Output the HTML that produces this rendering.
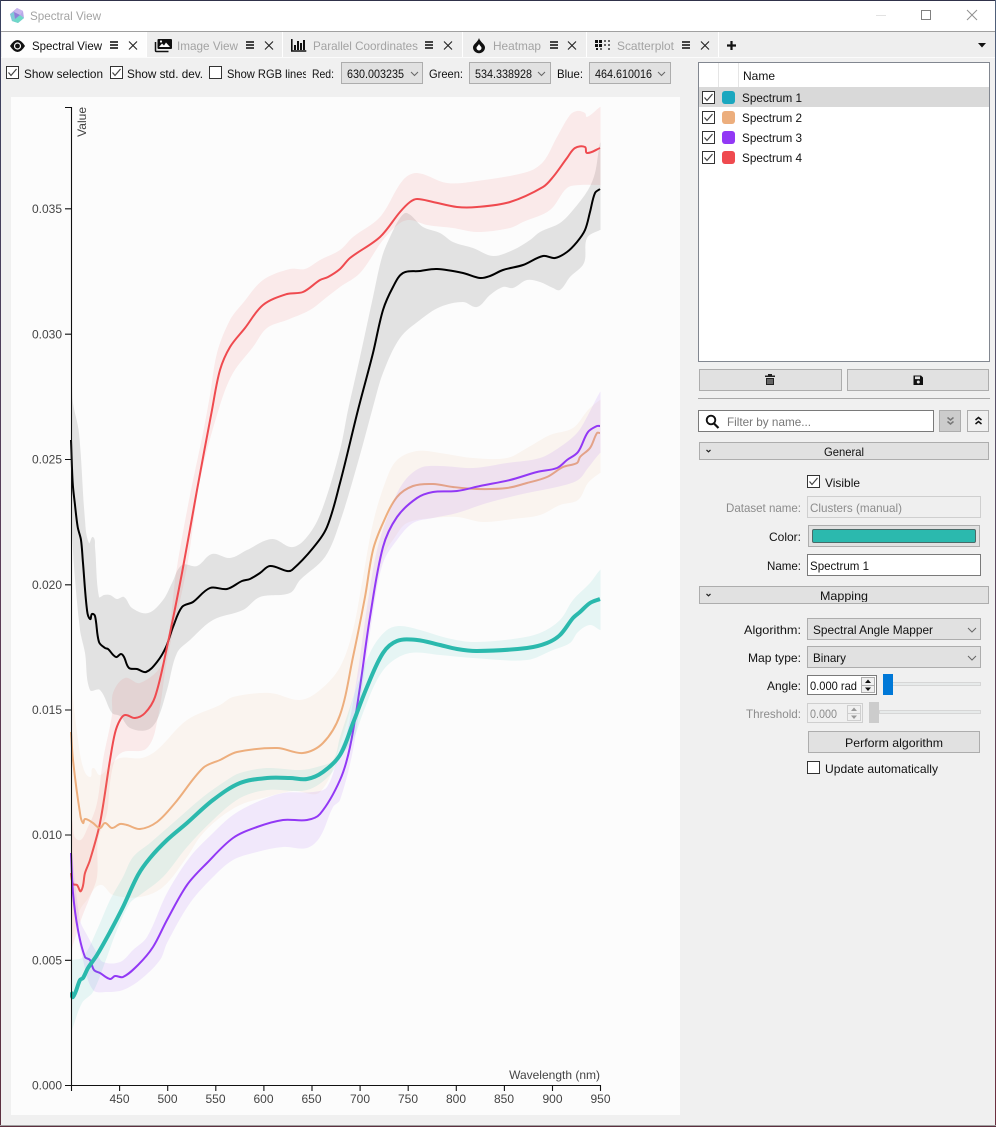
<!DOCTYPE html>
<html><head><meta charset="utf-8"><title>Spectral View</title>
<style>
html,body{margin:0;padding:0;background:#f0f0f0;width:996px;height:1127px;overflow:hidden}
svg{display:block}
text{font-family:"Liberation Sans",sans-serif;font-size:12px;fill:#111}
.g{fill:#8c8c8c}
.t{fill:#a3a3a3}
.ax{fill:#444}
.ph{fill:#777}
.btn{fill:#e1e1e1;stroke:#adadad;stroke-width:1;shape-rendering:crispEdges}
.inp{fill:#fff;stroke:#7a7a7a;stroke-width:1;shape-rendering:crispEdges}
.dis{fill:#efefef;stroke:#cfcfcf;stroke-width:1;shape-rendering:crispEdges}
.cb{fill:#fff;stroke:#333;stroke-width:1;shape-rendering:crispEdges}
.ck{fill:none;stroke:#444;stroke-width:1.2}
.ln{fill:none;stroke-linejoin:round;stroke-linecap:butt}
.chev{fill:none;stroke:#666;stroke-width:1}
.x{stroke:#222;stroke-width:1.1;fill:none}
.ham{fill:#444}
.band{fill-opacity:.1;stroke:none}
</style></head><body>
<svg width="996" height="1127" viewBox="0 0 996 1127" xmlns="http://www.w3.org/2000/svg">
<defs>
<linearGradient id="edge" x1="0" y1="0" x2="0" y2="1"><stop offset="0" stop-color="#38415f"/><stop offset=".5" stop-color="#5b3d58"/><stop offset="1" stop-color="#5c2f3f"/></linearGradient>
<linearGradient id="edge2" x1="0" y1="0" x2="0" y2="1"><stop offset="0" stop-color="#50607a"/><stop offset=".5" stop-color="#5b4a60"/><stop offset="1" stop-color="#6c2f3f"/></linearGradient>
<clipPath id="rgb"><rect x="225" y="62" width="81" height="24"/></clipPath>
<clipPath id="map"><rect x="700" y="587" width="288" height="15"/></clipPath>
<clipPath id="plot"><rect x="70" y="97" width="530.500" height="1000"/></clipPath>
</defs>
<rect width="996" height="1127" fill="#f0f0f0"/>
<!-- title bar -->
<rect x="0" y="0" width="996" height="31" fill="#fff"/>
<rect x="0" y="31" width="996" height="1" fill="#a0a0a0"/>
<polygon points="17,8 23,11 24,18 18,23 12,21 10,14" fill="#b9a9e8"/>
<polygon points="17,8 23,11 20,15 14,12" fill="#c9b6ee"/>
<polygon points="10,14 14,12 15,19 12,21" fill="#7fcbd6"/>
<polygon points="15,19 20,15 24,18 18,23 12,21" fill="#6fd8c8"/>
<polygon points="14,12 20,15 15,19" fill="#8f7fd8"/>
<text x="30" y="20" class="t" textLength="71" lengthAdjust="spacingAndGlyphs">Spectral View</text>
<rect x="876" y="15" width="10" height="1" fill="#e2e2e2"/>
<rect x="921.500" y="10.500" width="9" height="9" fill="none" stroke="#808080" shape-rendering="crispEdges"/>
<path d="M967 10L977 20M977 10L967 20" stroke="#909090" fill="none"/>
<!-- tab bar -->
<rect x="2" y="32" width="994" height="25" fill="#eeeeee"/>
<rect x="2" y="32" width="144" height="25" fill="#fdfdfd"/>
<rect x="146" y="32" width="1" height="25" fill="#fff"/>
<rect x="282" y="32" width="1" height="25" fill="#fff"/>
<rect x="462" y="32" width="1" height="25" fill="#fff"/>
<rect x="586" y="32" width="1" height="25" fill="#fff"/>
<rect x="718" y="32" width="1" height="25" fill="#fff"/>
<rect x="0" y="57" width="996" height="1" fill="#fbfbfb"/>
<!-- eye -->
<path d="M10 46Q17.500 34 25 46Q17.500 58 10 46Z" fill="#111"/><circle cx="17.500" cy="46" r="3.600" fill="#fff"/><circle cx="17.500" cy="46" r="2.400" fill="#111"/>
<text x="32" y="50" textLength="70" lengthAdjust="spacingAndGlyphs">Spectral View</text>
<g class="ham"><rect x="110" y="41" width="8" height="2"/><rect x="110" y="44" width="8" height="2"/><rect x="110" y="47" width="8" height="2"/></g>
<path class="x" d="M129 41.500L137 49.500M137 41.500L129 49.500"/>
<!-- image icon -->
<path d="M158.500 39h12.500a1 1 0 0 1 1 1v8a1 1 0 0 1-1 1h-12.500a1 1 0 0 1-1-1v-8a1 1 0 0 1 1-1z" fill="#111"/>
<path d="M155.500 42v8.500a1 1 0 0 0 1 1h12" fill="none" stroke="#111" stroke-width="1.500"/>
<path d="M159 47l3-3.500 2 2 2-3 4 4.500z" fill="#fff"/><circle cx="161" cy="41.500" r="1.100" fill="#fff"/>
<text x="177" y="50" class="t" textLength="61" lengthAdjust="spacingAndGlyphs">Image View</text>
<g class="ham"><rect x="246" y="41" width="8" height="2"/><rect x="246" y="44" width="8" height="2"/><rect x="246" y="47" width="8" height="2"/></g>
<path class="x" d="M265 41.500L273 49.500M273 41.500L265 49.500"/>
<!-- chart icon -->
<path d="M291.800 39v12h14.500" fill="none" stroke="#111" stroke-width="1.600"/>
<g fill="#111"><rect x="294" y="45" width="2" height="5"/><rect x="297" y="41" width="2" height="9"/><rect x="300" y="43" width="2" height="7"/><rect x="303" y="40" width="2" height="10"/></g>
<text x="313" y="50" class="t" textLength="105" lengthAdjust="spacingAndGlyphs">Parallel Coordinates</text>
<g class="ham"><rect x="425" y="41" width="8" height="2"/><rect x="425" y="44" width="8" height="2"/><rect x="425" y="47" width="8" height="2"/></g>
<path class="x" d="M444 41.500L452 49.500M452 41.500L444 49.500"/>
<!-- drop icon -->
<path d="M479 38C480 42 485 44 485 47.500A6 5.700 0 0 1 473 47.500C473 44 478 42 479 38Z" fill="#111"/><path d="M479 44C480 46 481.500 46.500 481.500 48A2.500 2.500 0 0 1 476.500 48C476.500 46.500 478 46 479 44Z" fill="#fff"/>
<text x="493" y="50" class="t" textLength="48" lengthAdjust="spacingAndGlyphs">Heatmap</text>
<g class="ham"><rect x="550" y="41" width="8" height="2"/><rect x="550" y="44" width="8" height="2"/><rect x="550" y="47" width="8" height="2"/></g>
<path class="x" d="M568 41.500L576 49.500M576 41.500L568 49.500"/>
<!-- scatter icon -->
<g fill="#111"><rect x="595" y="40" width="3" height="3"/><rect x="599" y="40" width="3" height="3"/><rect x="595" y="44" width="3" height="3"/><rect x="599" y="44" width="3" height="3"/><rect x="596" y="48" width="2" height="2"/></g>
<g fill="#666"><rect x="604" y="40" width="2" height="2"/><rect x="608" y="40" width="2" height="2"/><rect x="604" y="44" width="2" height="2"/><rect x="608" y="44" width="2" height="2"/><rect x="600" y="48" width="2" height="2"/><rect x="608" y="48" width="2" height="2"/></g>
<text x="617" y="50" class="t" textLength="57" lengthAdjust="spacingAndGlyphs">Scatterplot</text>
<g class="ham"><rect x="682" y="41" width="8" height="2"/><rect x="682" y="44" width="8" height="2"/><rect x="682" y="47" width="8" height="2"/></g>
<path class="x" d="M701 41.500L709 49.500M709 41.500L701 49.500"/>
<path d="M731.500 41v9M727 45.500h9" stroke="#111" stroke-width="2.200" fill="none"/>
<polygon points="978,43 986,43 982,47.500" fill="#111"/>
<!-- toolbar -->
<rect class="cb" x="6.500" y="66.500" width="12" height="12"/><path class="ck" d="M8.500 72.500l2.500 3 5.500-6.500"/>
<text x="24" y="78" textLength="79" lengthAdjust="spacingAndGlyphs">Show selection</text>
<rect class="cb" x="110.500" y="66.500" width="12" height="12"/><path class="ck" d="M112.500 72.500l2.500 3 5.500-6.500"/>
<text x="127" y="78" textLength="76" lengthAdjust="spacingAndGlyphs">Show std. dev.</text>
<rect class="cb" x="209.500" y="66.500" width="12" height="12"/>
<text x="227" y="78" textLength="81" lengthAdjust="spacingAndGlyphs" clip-path="url(#rgb)">Show RGB lines</text>
<text x="312" y="78" textLength="22" lengthAdjust="spacingAndGlyphs">Red:</text>
<rect class="btn" x="341.500" y="62.500" width="81" height="21"/>
<text x="347" y="78" textLength="57" lengthAdjust="spacingAndGlyphs">630.003235</text>
<path class="chev" d="M411 72l3.500 3.500 3.500-3.500"/>
<text x="429" y="78" textLength="34" lengthAdjust="spacingAndGlyphs">Green:</text>
<rect class="btn" x="469.500" y="62.500" width="81" height="21"/>
<text x="475" y="78" textLength="57" lengthAdjust="spacingAndGlyphs">534.338928</text>
<path class="chev" d="M538 72l3.500 3.500 3.500-3.500"/>
<text x="557" y="78" textLength="26" lengthAdjust="spacingAndGlyphs">Blue:</text>
<rect class="btn" x="589.500" y="62.500" width="81" height="21"/>
<text x="595" y="78" textLength="57" lengthAdjust="spacingAndGlyphs">464.610016</text>
<path class="chev" d="M658 72l3.500 3.500 3.500-3.500"/>
<!-- plot -->
<rect x="11" y="97" width="669" height="1018" fill="#fcfcfc"/>
<g clip-path="url(#plot)">
<!-- black -->
<polygon class="band" fill="#000" points="72,385 73,403 79,433 85,520 89,543 93,537 95,547 99,597 104,595 110,595 117,599 124,597 132,608 148,613 163,600 172,583 182,565 197,566 212,554 230,558 247,550 272,539 293,547 310,533 323,507 340,450 348,410 360,357 373,297 382,257 390,237 400,218 407,213 423,227 440,233 453,242 473,248 493,256 513,250 530,240 540,232 560,223 573,210 588,190 595,173 600,143 602,143 602,230 600,230 587,238 584,263 570,277 560,290 553,288 540,282 527,280 513,288 503,287 490,295 477,307 463,302 440,307 420,320 400,338 383,373 373,407 360,455 340,522 325,557 300,580 290,593 260,597 243,610 213,620 190,640 177,653 167,690 157,720 147,730 130,728 120,716 112,713 100,690 90,690 85,653 80,630 74,567 72,533"/>
<polyline class="ln" stroke="#000" stroke-width="2" points="71,440 72.700,483 75,505 77.700,527 81,540 83,563 87,610 90,619 92,614 95,616 99,642 105,648 108,649 116,657 121,654 124,657 129,668 137,669 146,672 157,662 166,647 173,627 182,607 193,602 210,588 227,589 242,581 250,579 260,573 270,566 287,571 292,570 313,548 327,527 340,483 358,410 373,353 383,310 393,287 403,273 420,271 437,269 463,273 480,278 490,276 503,270 523,265 543,256 555,258 567,252 577,242 585,230 590,212 595,193 600,189"/>
<!-- red -->
<polygon class="band" fill="#ef4a4f" points="72,820 78,840 88,827 97,803 103,760 112,715 113,693 125,678 140,683 163,663 170,625 176,573 190,495 203,433 210,395 217,353 230,320 243,303 263,280 290,269 305,269 320,260 340,250 353,237 380,217 403,180 417,173 447,183 477,181 527,172 543,162 557,137 570,115 577,111 585,113 587,117 600,107 602,107 602,185 600,185 580,185 567,188 550,210 523,222 510,228 477,232 453,228 427,225 410,220 400,223 383,240 360,273 340,287 327,297 310,310 287,320 267,328 253,347 233,373 220,405 200,480 187,567 167,660 158,717 147,748 123,752 115,760 110,783 107,813 98,840 97,877 90,897 82,917 73,945 72,950"/>
<polyline class="ln" stroke="#ef4a4f" stroke-width="2" points="71,873 73,884 77,885 81,891 85,873 90,860 100,823 110,760 115,733 120,720 125,715 135,718 145,713 155,697 167,647 182,573 197,490 212,410 220,370 230,347 245,328 263,305 287,294 303,292 320,280 328,277 340,269 350,258 380,237 400,212 410,202 417,199 433,202 457,207 477,207 510,202 543,187 553,177 567,158 575,148 585,147 587,153 600,148"/>
<!-- orange -->
<polygon class="band" fill="#edae7d" points="72,690 78,740 83,767 90,777 93,768 100,775 110,765 120,758 142,758 157,750 187,720 220,705 233,697 270,693 300,700 320,690 340,667 353,630 363,577 373,523 385,483 397,460 417,451 440,453 473,458 507,458 527,448 550,435 573,428 588,410 600,400 602,400 602,473 600,473 588,483 578,500 560,505 540,515 513,519 483,522 457,517 433,518 407,523 395,537 383,557 373,607 363,657 357,683 340,745 320,792 293,791 263,798 240,805 217,820 200,837 187,857 163,887 140,897 113,895 100,885 87,900 80,910 72,940"/>
<polyline class="ln" stroke="#edae7d" stroke-width="2" points="71,732 73,760 80,813 83,823 85,819 93,823 100,828 105,823 112,828 120,824 127,825 140,829 157,822 175,803 203,768 220,760 237,752 277,748 303,753 323,743 340,715 353,657 365,597 373,550 383,523 397,497 413,486 433,484 453,487 477,489 507,488 527,483 547,477 563,467 577,463 580,457 590,448 597,433 600,433"/>
<!-- purple -->
<polygon class="band" fill="#9238f5" points="72,853 80,920 87,935 97,953 103,962 120,962 133,950 147,937 167,893 190,857 213,833 233,815 257,802 283,793 313,792 327,787 340,750 347,733 357,677 367,607 377,550 390,510 403,483 420,468 440,466 473,468 507,463 540,458 560,447 577,433 587,417 600,392 602,392 602,453 600,453 588,468 578,480 557,487 527,493 487,503 457,513 433,518 413,523 397,540 383,563 373,613 363,683 353,750 340,800 333,807 320,837 307,848 283,847 257,852 233,860 213,877 190,903 167,943 160,960 140,980 123,990 107,992 93,990 83,960 75,920 72,893"/>
<polyline class="ln" stroke="#9238f5" stroke-width="2" points="71,853 73,893 78,930 85,957 90,960 94,970 100,973 110,979 115,976 123,977 138,965 153,947 167,920 187,885 207,863 233,838 257,827 283,820 307,820 320,814 340,780 350,747 360,687 370,617 383,547 397,517 417,498 433,492 457,491 480,486 510,480 537,472 557,468 567,460 578,452 588,432 597,426 600,426"/>
<!-- teal -->
<polygon class="band" fill="#27b8ad" points="72,960 83,957 97,930 110,900 123,877 133,857 150,843 173,823 203,797 227,780 240,773 267,768 300,770 317,767 333,760 340,737 350,707 360,677 373,647 387,630 400,626 420,630 447,638 473,642 513,639 540,633 560,620 573,600 590,583 600,570 602,570 602,630 600,630 590,625 578,632 570,643 553,650 527,660 473,658 440,655 410,653 390,663 377,680 363,713 353,740 340,757 330,775 307,790 267,790 240,798 213,820 187,847 163,877 140,895 130,903 117,930 107,957 93,992 82,1003 72,1030"/>
<polyline class="ln" stroke="#2bb9ad" stroke-width="4" points="71,992 73,997 80,980 83,978 88,968 97,955 110,932 123,907 138,875 150,858 167,840 187,823 213,800 240,783 267,778 290,778 307,779 323,772 340,755 353,723 367,687 383,653 397,641 417,640 440,645 457,649 477,651 527,648 547,643 560,635 573,618 580,612 590,603 600,599"/>
</g>
<!-- axes -->
<path d="M65 107.500h6.500V1085.500H600.500V1091M65 208.800h6M65 334.200h6M65 459.500h6M65 584.800h6M65 710h6M65 835h6M65 960.300h6M65 1085.500h6M71.500 1085v6M119.600 1085v6M167.700 1085v6M215.800 1085v6M263.900 1085v6M312 1085v6M360.100 1085v6M408.200 1085v6M456.300 1085v6M504.400 1085v6M552.500 1085v6" fill="none" stroke="#111" stroke-width="1.100"/>
<g text-anchor="end">
<text class="ax" x="62" y="213">0.035</text><text class="ax" x="62" y="338.500">0.030</text><text class="ax" x="62" y="463.500">0.025</text><text class="ax" x="62" y="589">0.020</text><text class="ax" x="62" y="714">0.015</text><text class="ax" x="62" y="839">0.010</text><text class="ax" x="62" y="964.500">0.005</text><text class="ax" x="62" y="1089.500">0.000</text>
</g>
<g text-anchor="middle">
<text class="ax" x="119.500" y="1103">450</text><text class="ax" x="167.500" y="1103">500</text><text class="ax" x="215.500" y="1103">550</text><text class="ax" x="263.500" y="1103">600</text><text class="ax" x="311.500" y="1103">650</text><text class="ax" x="360" y="1103">700</text><text class="ax" x="408" y="1103">750</text><text class="ax" x="456" y="1103">800</text><text class="ax" x="504" y="1103">850</text><text class="ax" x="552.500" y="1103">900</text><text class="ax" x="600.500" y="1103">950</text>
</g>
<text class="ax" x="600" y="1079" text-anchor="end">Wavelength (nm)</text>
<text class="ax" transform="translate(86,107) rotate(-90)" text-anchor="end">Value</text>
<!-- list -->
<rect x="698.500" y="62.500" width="291" height="299" fill="#fff" stroke="#828790" shape-rendering="crispEdges"/>
<rect x="718" y="63" width="1" height="24" fill="#e5e5e5"/><rect x="738" y="63" width="1" height="24" fill="#e5e5e5"/>
<text x="743" y="80" textLength="32" lengthAdjust="spacingAndGlyphs">Name</text>
<rect x="699" y="87" width="290" height="20" fill="#d9d9d9"/>
<g>
<rect class="cb" x="702.500" y="91.500" width="12" height="12"/><path class="ck" d="M704.500 97.500l2.500 3 5.500-6.500"/>
<rect x="722" y="91" width="13" height="13" rx="3" fill="#1ba7bf"/><text x="742" y="102" textLength="60" lengthAdjust="spacingAndGlyphs">Spectrum 1</text>
<rect class="cb" x="702.500" y="111.500" width="12" height="12"/><path class="ck" d="M704.500 117.500l2.500 3 5.500-6.500"/>
<rect x="722" y="111" width="13" height="13" rx="3" fill="#ecae7d"/><text x="742" y="122" textLength="60" lengthAdjust="spacingAndGlyphs">Spectrum 2</text>
<rect class="cb" x="702.500" y="131.500" width="12" height="12"/><path class="ck" d="M704.500 137.500l2.500 3 5.500-6.500"/>
<rect x="722" y="131" width="13" height="13" rx="3" fill="#9238f5"/><text x="742" y="142" textLength="60" lengthAdjust="spacingAndGlyphs">Spectrum 3</text>
<rect class="cb" x="702.500" y="151.500" width="12" height="12"/><path class="ck" d="M704.500 157.500l2.500 3 5.500-6.500"/>
<rect x="722" y="151" width="13" height="13" rx="3" fill="#ef4a4f"/><text x="742" y="162" textLength="60" lengthAdjust="spacingAndGlyphs">Spectrum 4</text>
</g>
<!-- buttons -->
<rect class="btn" x="699.500" y="369.500" width="142" height="21"/>
<rect class="btn" x="847.500" y="369.500" width="141" height="21"/>
<path d="M765 375.500h10v1.500h-10zM768 374h4v1.500h-4zM766 378h8v7h-8z" fill="#222"/><path d="M768 379v5M770 379v5M772 379v5" stroke="#e1e1e1" stroke-width=".7"/>
<path d="M913.500 375.500h7.500l2 2v7.500h-9.500z" fill="#111"/><rect x="915" y="376.500" width="5" height="2.600" fill="#e1e1e1"/><circle cx="918.300" cy="382" r="1.500" fill="#e1e1e1"/>
<rect x="698" y="398" width="292" height="1" fill="#a8a8a8"/>
<!-- filter -->
<rect class="inp" x="698.500" y="410.500" width="235" height="21"/>
<circle cx="711" cy="420" r="4.300" fill="none" stroke="#111" stroke-width="1.900"/><path d="M714 423.500l4.500 4.500" stroke="#111" stroke-width="2.200"/>
<text x="727" y="426" class="ph" textLength="84" lengthAdjust="spacingAndGlyphs">Filter by name...</text>
<rect x="939.500" y="410.500" width="21" height="21" fill="#cccccc" stroke="#adadad" shape-rendering="crispEdges"/>
<path d="M947.500 417.500l3 2.500 3-2.500M947.500 421.500l3 2.500 3-2.500" fill="none" stroke="#777" stroke-width="1.500"/>
<rect x="967.500" y="410.500" width="21" height="21" fill="#f0f0f0" stroke="#adadad" shape-rendering="crispEdges"/>
<path d="M975.500 420l3-2.500 3 2.500M975.500 424l3-2.500 3 2.500" fill="none" stroke="#111" stroke-width="1.500"/>
<!-- General -->
<rect class="btn" x="699.500" y="442.500" width="289" height="17"/>
<path d="M706.500 450l2 1.800 2-1.800" fill="none" stroke="#222" stroke-width="1.200"/>
<text x="824" y="456" textLength="40" lengthAdjust="spacingAndGlyphs">General</text>
<rect class="cb" x="807.500" y="475.500" width="12" height="12"/><path class="ck" d="M809.500 481.500l2.500 3 5.500-6.500"/>
<text x="825" y="487" textLength="35" lengthAdjust="spacingAndGlyphs">Visible</text>
<text x="726" y="512" class="g" textLength="75" lengthAdjust="spacingAndGlyphs">Dataset name:</text>
<rect class="dis" x="807.500" y="496.500" width="173" height="21"/>
<text x="810" y="512" class="g" textLength="92" lengthAdjust="spacingAndGlyphs">Clusters (manual)</text>
<text x="769" y="541" textLength="32" lengthAdjust="spacingAndGlyphs">Color:</text>
<rect class="btn" x="808.500" y="525.500" width="171" height="21"/>
<rect x="812.500" y="529.500" width="163" height="13" rx="1.500" fill="#2bb9ae" stroke="#4a6a68"/>
<text x="767" y="570" textLength="34" lengthAdjust="spacingAndGlyphs">Name:</text>
<rect class="inp" x="807.500" y="554.500" width="173" height="21"/>
<text x="810" y="570" textLength="59" lengthAdjust="spacingAndGlyphs">Spectrum 1</text>
<!-- Mapping -->
<rect class="btn" x="699.500" y="586.500" width="289" height="17"/>
<path d="M706.500 594l2 1.800 2-1.800" fill="none" stroke="#222" stroke-width="1.200"/>
<text x="820" y="600" textLength="48" lengthAdjust="spacingAndGlyphs" clip-path="url(#map)">Mapping</text>
<text x="744" y="634" textLength="57" lengthAdjust="spacingAndGlyphs">Algorithm:</text>
<rect class="btn" x="807.500" y="618.500" width="173" height="21"/>
<text x="813" y="634" textLength="120" lengthAdjust="spacingAndGlyphs">Spectral Angle Mapper</text>
<path class="chev" d="M968 628l4 4 4-4"/>
<text x="748" y="662" textLength="53" lengthAdjust="spacingAndGlyphs">Map type:</text>
<rect class="btn" x="807.500" y="646.500" width="173" height="21"/>
<text x="813" y="662" textLength="33" lengthAdjust="spacingAndGlyphs">Binary</text>
<path class="chev" d="M968 656l4 4 4-4"/>
<text x="767" y="690" textLength="34" lengthAdjust="spacingAndGlyphs">Angle:</text>
<rect class="inp" x="807.500" y="675.500" width="69" height="19"/>
<text x="810" y="690" textLength="47" lengthAdjust="spacingAndGlyphs">0.000 rad</text>
<rect x="861.500" y="677.500" width="13" height="15" fill="#f0f0f0" stroke="#adadad" shape-rendering="crispEdges"/>
<rect x="862" y="685" width="12" height="1" fill="#adadad"/>
<polygon points="868,679.500 871,683 865,683" fill="#111"/><polygon points="868,691 871,687.500 865,687.500" fill="#111"/>
<rect x="883.500" y="682.500" width="97" height="3" fill="#e7eaea" stroke="#d6d6d6" shape-rendering="crispEdges"/>
<rect x="883" y="674" width="10" height="21" fill="#0078d7"/>
<text x="746" y="718" class="g" textLength="55" lengthAdjust="spacingAndGlyphs">Threshold:</text>
<rect class="dis" x="807.500" y="703.500" width="55" height="19" style="fill:#f0f0f0"/>
<text x="810" y="718" class="g" textLength="27" lengthAdjust="spacingAndGlyphs">0.000</text>
<rect x="847.500" y="705.500" width="13" height="15" fill="#f0f0f0" stroke="#cfcfcf" shape-rendering="crispEdges"/>
<rect x="848" y="713" width="12" height="1" fill="#cfcfcf"/>
<polygon points="854,707.500 857,711 851,711" fill="#999"/><polygon points="854,719 857,715.500 851,715.500" fill="#999"/>
<rect x="879.500" y="710.500" width="101" height="3" fill="#e7eaea" stroke="#d6d6d6" shape-rendering="crispEdges"/>
<rect x="869" y="702" width="10" height="21" fill="#cccccc"/>
<rect class="btn" x="808.500" y="731.500" width="171" height="21"/>
<text x="845" y="747" textLength="98" lengthAdjust="spacingAndGlyphs">Perform algorithm</text>
<rect class="cb" x="807.500" y="761.500" width="12" height="12"/>
<text x="825" y="773" textLength="113" lengthAdjust="spacingAndGlyphs">Update automatically</text>
<!-- window edges -->
<rect x="0" y="0" width="996" height="1" fill="#30324a"/>
<rect x="0" y="0" width="1" height="1127" fill="url(#edge)"/>
<rect x="995" y="0" width="1" height="1127" fill="url(#edge2)"/>
<rect x="0" y="1125" width="996" height="1" fill="#a0a0a0"/>
<rect x="0" y="1126" width="996" height="1" fill="#5c2f3f"/>
</svg>
<script>
(function(){
var NS="http://www.w3.org/2000/svg";
var els=document.querySelectorAll("polyline.ln,polygon.band");
for(var k=0;k<els.length;k++){
  var e=els[k],closed=e.tagName.toLowerCase()==="polygon";
  var n=e.getAttribute("points").trim().split(/\s+/).map(function(s){var a=s.split(",");return[+a[0],+a[1]]});
  var d="M"+n[0][0]+" "+n[0][1];
  function tan(i){
    var a=n[Math.max(i-1,0)],b=n[Math.min(i+1,n.length-1)];
    var x=b[0]-a[0],y=b[1]-a[1],l=Math.sqrt(x*x+y*y)||1;
    return[x/l,y/l];
  }
  for(var i=0;i<n.length-1;i++){
    var p=n[i],q=n[i+1],s=Math.sqrt(Math.pow(q[0]-p[0],2)+Math.pow(q[1]-p[1],2))*.33;
    var t1=tan(i),t2=tan(i+1);
    d+="C"+(p[0]+t1[0]*s).toFixed(1)+" "+(p[1]+t1[1]*s).toFixed(1)+" "+(q[0]-t2[0]*s).toFixed(1)+" "+(q[1]-t2[1]*s).toFixed(1)+" "+q[0]+" "+q[1];
  }
  if(closed)d+="Z";
  var r=document.createElementNS(NS,"path");
  r.setAttribute("d",d);
  r.setAttribute("class",e.getAttribute("class"));
  if(e.getAttribute("fill"))r.setAttribute("fill",e.getAttribute("fill"));
  if(e.getAttribute("stroke")){r.setAttribute("stroke",e.getAttribute("stroke"));r.setAttribute("stroke-width",e.getAttribute("stroke-width"));}
  e.parentNode.replaceChild(r,e);
}
})();
</script>
</body></html>
